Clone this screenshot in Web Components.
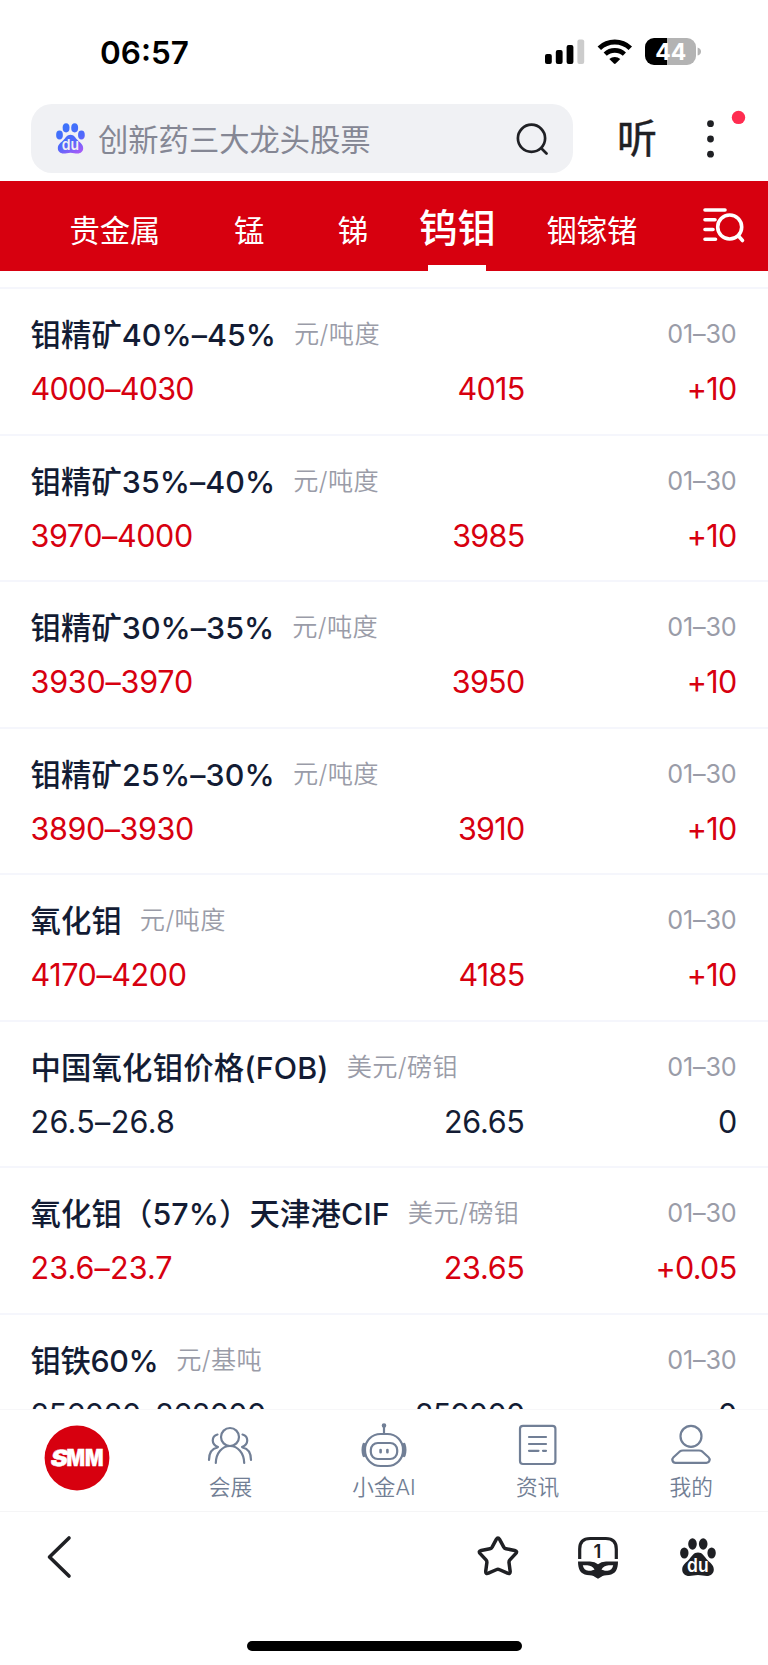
<!doctype html>
<html lang="zh-CN">
  <head>
    <meta charset="UTF-8" />
    <meta name="viewport" content="width=device-width, initial-scale=1.0" />
    <title>钨钼</title>
    <style>
		body {
			margin: 0;
			background: #fff;
			font-family: Inter, "Noto Sans CJK SC", sans-serif;
		}
    </style>
  </head>
  <body>

    <metal-app></metal-app>

    <script>
		// Small helper: open shadow root with some markup in it.
		function render(el, html) {
			el.attachShadow({ mode: 'open' }).innerHTML = html;
		}

		class StatusBar extends HTMLElement {
			constructor() {
				super();
				render(this, `
				<style>
					:host { display: flex; justify-content: space-between; height: 104px; box-sizing: border-box; padding: 33px 67px 0 100px; }
					.time { font-size: 31.5px; font-weight: 600; line-height: 39px; color: #000; }
					svg { display: block; }
				</style>
				<span class="time"><slot></slot></span>
				<svg width="157" height="38" viewBox="544 33 157 38">
					<rect x="545" y="54" width="6.8" height="10" rx="2"/>
					<rect x="555.8" y="50" width="6.8" height="14" rx="2"/>
					<rect x="566.6" y="45" width="6.8" height="19" rx="2"/>
					<rect x="577.4" y="39.5" width="6.8" height="24.5" rx="2" fill="#ccc"/>
					<g fill="none" stroke="#000" stroke-width="5">
						<path d="M599.3 48.3a22.5 22.5 0 0 1 31 0"/>
						<path d="M605.2 54.2a14 14 0 0 1 19.2 0" stroke-width="4.6"/>
					</g>
					<path d="M609.3 59a8.4 8.4 0 0 1 11 0l-4.6 4.6q-.9.8-1.8 0z"/>
					<path d="M654 38h13v27h-13a9 9 0 0 1-9-9v-9a9 9 0 0 1 9-9z"/>
					<path d="M667 38h20a9 9 0 0 1 9 9v9a9 9 0 0 1-9 9h-20z" fill="#b3b3b3"/>
					<path d="M697.6 47.5q3.4 1 3.4 4t-3.4 4z" fill="#b3b3b3"/>
					<text x="670.7" y="59.8" text-anchor="middle" font-size="23" font-weight="650" fill="#fff" textLength="31">44</text>
				</svg>`);
			}
		}
		customElements.define('status-bar', StatusBar);

		class PawIcon extends HTMLElement {
			constructor() {
				super();
				render(this, `
				<style>
					:host { display: block; width: 36px; height: 38px; }
					svg { display: block; width: 100%; height: 100%; }
					.fill { fill: var(--paw-fill, #1f2024); }
				</style>
				<svg viewBox="0 0 36 38">
					<defs>
						<linearGradient id="paw" gradientUnits="userSpaceOnUse" x1="8" y1="6" x2="26" y2="38">
							<stop offset="0" stop-color="#3d72fb"/>
							<stop offset=".55" stop-color="#5068fb"/>
							<stop offset="1" stop-color="#a35cf8"/>
						</linearGradient>
					</defs>
					<g class="fill">
						<ellipse cx="12.5" cy="6" rx="4.3" ry="5.8"/>
						<ellipse cx="23.2" cy="6" rx="4.3" ry="5.8"/>
						<ellipse cx="4.3" cy="15" rx="4.2" ry="5.6"/>
						<ellipse cx="31.6" cy="15" rx="4.2" ry="5.6"/>
						<path d="M18 14.5c4.5 0 6 3.5 8.5 6.5 3 3.5 7.3 5.5 7.3 10.5 0 4-3 6.5-7 6.5-3 0-5.5-1-8.8-1s-5.8 1-8.8 1c-4 0-7-2.5-7-6.5 0-5 4.3-7 7.3-10.5 2.5-3 4-6.5 8.5-6.5z"/>
					</g>
					<text x="17.8" y="34" text-anchor="middle" font-size="18.5" font-weight="600" fill="var(--paw-text, #fff)" textLength="21.5" lengthAdjust="spacingAndGlyphs">du</text>
				</svg>`);
				if (this.hasAttribute('gradient')) {
					this.shadowRoot.querySelector('.fill').style.fill = 'url(#paw)';
				}
			}
		}
		customElements.define('paw-icon', PawIcon);

		class SearchHeader extends HTMLElement {
			constructor() {
				super();
				render(this, `
				<style>
					:host { display: flex; height: 77px; align-items: flex-start; }
					.box {
						display: flex; align-items: center; box-sizing: border-box;
						width: 542px; height: 69px; margin-left: 31px; padding: 0 25px;
						border-radius: 21px; background: #f0f1f4;
					}
					paw-icon { width: 29px; height: 30.5px; margin-right: 13px; --paw-text: #f0f1f4; }
					.hint { flex: 1; padding-top: 2px; font-size: 30.3px; line-height: 44px; color: #858794; white-space: nowrap; }
					.listen { margin-left: 44px; width: 42px; font-size: 40px; line-height: 70px; color: #1f2024; -webkit-text-stroke: .5px #1f2024; }
					.more { margin-left: 40px; }
					svg { display: block; flex: none; }
				</style>
				<div class="box">
					<paw-icon gradient></paw-icon>
					<span class="hint"><slot></slot></span>
					<svg width="32" height="32" viewBox="0 0 32 32" fill="none" stroke="#1f2024" stroke-width="2.7" stroke-linecap="round">
						<circle cx="15.5" cy="15.3" r="13.6"/>
						<path d="M25.5 25.5l5 5"/>
					</svg>
				</div>
				<span class="listen">听</span>
				<svg class="more" width="58" height="69" viewBox="0 0 58 69" fill="#1f2024">
					<circle cx="11.5" cy="19.7" r="3.4"/><circle cx="11.5" cy="35" r="3.4"/><circle cx="11.5" cy="50.2" r="3.4"/>
					<circle cx="39.5" cy="13.4" r="6.7" fill="#ff2c50"/>
				</svg>`);
			}
		}
		customElements.define('search-header', SearchHeader);

		class MetalTab extends HTMLElement {
			constructor() {
				super();
				render(this, `
				<style>
					:host { display: flex; flex-direction: column; align-items: center; flex: none; height: 90px; font-size: 30.3px; line-height: 100px; color: #fff; white-space: nowrap; }
					:host([active]) { font-size: 38.5px; font-weight: 500; line-height: 94px; }
					.label { height: 84px; }
					.bar { display: none; width: 58px; height: 6px; background: #fff; }
					:host([active]) .bar { display: block; }
				</style>
				<div class="label"><slot></slot></div>
				<div class="bar"></div>`);
			}
		}
		customElements.define('metal-tab', MetalTab);

		class MetalTabs extends HTMLElement {
			constructor() {
				super();
				render(this, `
				<style>
					:host { display: flex; justify-content: space-between; height: 90px; padding: 0 22.5px 0 69.5px; background: #d7000f; }
					.tabs { display: flex; gap: 73.5px; }
					::slotted(:nth-child(4)) { margin-left: -22.5px; }
					::slotted(:nth-child(5)) { margin-left: -23px; }
					svg { margin-top: 24px; }
				</style>
				<div class="tabs"><slot></slot></div>
				<svg width="44" height="44" viewBox="0 0 44 44" fill="none" stroke="#fff" stroke-width="3.6" stroke-linecap="round">
					<path d="M3 5h20M3 14.8h10M3 24.5h8M3 34.2h10.5"/>
					<circle cx="27.7" cy="22" r="12"/>
					<path d="M36.5 31l4 4.5"/>
				</svg>`);
			}
		}
		customElements.define('metal-tabs', MetalTabs);

		class PriceRow extends HTMLElement {
			constructor() {
				super();
				render(this, `
				<style>
					:host { display: block; box-sizing: border-box; height: 146.5px; padding: 24px 31.5px 0 30.5px; border-top: 2px solid #f5f6fc; color: #d7000f; }
					:host([flat]) { color: #131c34; }
					.head { display: flex; align-items: center; height: 44px; }
					.name { font-size: 30.4px; font-weight: 500; line-height: 44px; letter-spacing: var(--name-track, .05px); color: #131c34; white-space: nowrap; }
					.unit { flex: 1; margin: -2px 0 0 18px; font-size: 25.2px; font-weight: 350; line-height: 44px; letter-spacing: .4px; color: #9a9ca8; }
					.date { margin-top: -2px; font-size: 25.2px; line-height: 44px; letter-spacing: -.2px; color: #9a9ca8; }
					.nums { display: grid; grid-template-columns: 1fr auto 212px; margin-top: 11px; font-size: 30.5px; line-height: 42px; letter-spacing: -.7px; }
					.range { letter-spacing: var(--range-track, -.4px); }
					.avg { letter-spacing: var(--avg-track, -.7px); }
					.change { text-align: right; }
				</style>
				<div class="head">
					<span class="name"><slot></slot></span>
					<span class="unit">${this.getAttribute('unit')}</span>
					<span class="date">01–30</span>
				</div>
				<div class="nums">
					<span class="range">${this.getAttribute('range')}</span>
					<span class="avg">${this.getAttribute('avg')}</span>
					<span class="change">${this.getAttribute('change')}</span>
				</div>`);
			}
		}
		customElements.define('price-row', PriceRow);

		class NavItem extends HTMLElement {
			constructor() {
				super();
				render(this, `
				<style>
					:host { display: flex; flex-direction: column; align-items: center; flex: 1; color: #717e94; font-size: 21.7px; font-weight: 350; line-height: 31px; }
					::slotted(svg) { display: block; fill: none; stroke: #717f96; stroke-width: 2.2; stroke-linecap: round; stroke-linejoin: round; }
				</style>
				<slot name="icon"></slot>
				<slot></slot>`);
			}
		}
		customElements.define('nav-item', NavItem);

		class AppNav extends HTMLElement {
			constructor() {
				super();
				render(this, `
				<style>
					:host { display: flex; box-sizing: border-box; height: 103px; border-top: 1px solid #f7f7f9; border-bottom: 1px solid #f5f5f6; }
					.logo { flex: 1; display: flex; justify-content: center; padding-top: 15px; }
				</style>
				<div class="logo">
					<svg width="66" height="66" viewBox="0 0 66 66">
						<circle cx="33" cy="33" r="32.4" fill="#d7000f"/>
						<g font-size="22.5" font-weight="900" fill="#fff" stroke="#fff" stroke-width=".4">
							<text transform="translate(5.5 41.3) skewX(-12)" textLength="17" lengthAdjust="spacingAndGlyphs">S</text>
							<text x="22.5" y="41.3" textLength="37" lengthAdjust="spacingAndGlyphs">MM</text>
						</g>
					</svg>
				</div>
				<nav-item>
					<svg slot="icon" width="60" height="62" viewBox="0 0 60 62">
						<circle cx="30" cy="27" r="9"/>
						<path d="M15.8 53c.2-10 6.4-17 14.2-17s14 7 14.2 17"/>
						<path d="M17.5 24.5c-6.3 1.8-6.5 10 .5 12.5M17.5 37.5C12 38.5 9 43 9 50M42.5 24.5c6.3 1.8 6.5 10-.5 12.5M42.5 37.5C48 38.5 51 43 51 50"/>
					</svg>
					会展
				</nav-item>
				<nav-item>
					<svg slot="icon" width="60" height="62" viewBox="0 0 60 62">
						<path d="M30 17v6"/>
						<circle cx="30" cy="15.5" r="1.2" fill="#717f96"/>
						<rect x="11" y="24" width="38" height="32" rx="15.5"/>
						<rect x="16.8" y="33" width="26.4" height="16" rx="7"/>
						<path d="M10 34.5q-1.8 5.5 0 11M50 34.5q1.8 5.5 0 11" stroke-width="3.2"/>
						<path d="M26.6 40v2.2M33.4 40v2.2" stroke-width="2.6"/>
					</svg>
					小金AI
				</nav-item>
				<nav-item>
					<svg slot="icon" width="60" height="62" viewBox="0 0 60 62">
						<rect x="12" y="15.8" width="35.4" height="38.2" rx="3"/>
						<path d="M21 27h17M21 34h17M21 40.8h9.5M35 40.8h3"/>
					</svg>
					资讯
				</nav-item>
				<nav-item>
					<svg slot="icon" width="60" height="62" viewBox="0 0 60 62">
						<circle cx="30" cy="26.3" r="10.5"/>
						<path d="M22 40.5h16q2 0 3.5 1.2l6 5.5q1.5 1.4 1 3.4-.6 2.2-3 2.2h-31q-2.4 0-3-2.2-.5-2 1-3.4l6-5.5Q20 40.5 22 40.5z"/>
					</svg>
					我的
				</nav-item>`);
			}
		}
		customElements.define('app-nav', AppNav);

		class BrowserBar extends HTMLElement {
			constructor() {
				super();
				render(this, `
				<style>
					:host { display: flex; flex-direction: column; align-items: center; height: 153px; }
					.tools { display: flex; align-items: center; align-self: stretch; height: 46px; margin-top: 22px; padding: 0 52px 0 37px; gap: 56px; }
					.back { margin-right: auto; }
					paw-icon { margin-left: 4px; }
					.home { width: 275px; height: 10px; margin-top: 60.5px; border-radius: 5px; background: #000; }
					svg { display: block; }
				</style>
				<div class="tools">
					<svg class="back" width="44" height="46" viewBox="0 0 44 46" fill="none" stroke="#1f2024" stroke-width="3.6" stroke-linecap="round" stroke-linejoin="round">
						<path d="M32 4L12.5 23l19.500 19"/>
					</svg>
					<svg width="44" height="46" viewBox="0 0 44 46" fill="none" stroke="#1f2024" stroke-width="3.6" stroke-linejoin="round">
						<path d="M20.3 4.6q1.7-3 3.4 0l4.3 8q.8 1.4 2.3 1.7l9 1.7q3.2.8 1 3.3l-6 6.5q-1 1.1-.9 2.7l1.2 9q.2 3.2-2.8 2l-8-3.6q-1.8-.8-3.6 0l-8 3.6q-3 1.2-2.8-2l1.2-9q.1-1.6-.9-2.7l-6-6.5q-2.200-2.500 1-3.300l9-1.700q1.500-.3 2.300-1.700z" transform="translate(.6 .9) scale(.97)"/>
					</svg>
					<svg width="44" height="46" viewBox="0 0 44 46">
						<path d="M3.7 25V15q0-10.5 10.5-10.5h15.6Q40.300 4.500 40.300 15v10" fill="none" stroke="#1f2024" stroke-width="3.2"/>
						<path fill-rule="evenodd" fill="#1f2024" d="M2 27.5h12q5 0 8 2.7 3-2.7 8-2.7h12c0 8-2.6 12.5-9 13.5-4 .7-6 .3-8 2l-3 1.7-3-1.7c-2-1.7-4-1.3-8-2-6.4-1-9-5.5-9-13.5zM6.8 31.2c.7 3.3 2.5 5.3 5.7 5.5 3 .2 4.5-.5 6-1.2-1.5-2.5-3.7-4-7.2-4.2zM37.2 31.2c-.7 3.3-2.5 5.3-5.7 5.5-3 .2-4.5-.5-6-1.2 1.5-2.5 3.7-4 7.2-4.2z"/>
						<text x="21.5" y="24.3" text-anchor="middle" font-size="18.5" font-weight="600" fill="#1f2024">1</text>
					</svg>
					<paw-icon></paw-icon>
				</div>
				<div class="home"></div>`);
			}
		}
		customElements.define('browser-bar', BrowserBar);

		class MetalApp extends HTMLElement {
			constructor() {
				super();
				render(this, `
				<style>
					:host { display: flex; flex-direction: column; width: 768px; height: 1665px; overflow: hidden; background: #fff; }
					status-bar, search-header, metal-tabs, app-nav, browser-bar { flex: none; }
					.list { flex: 1; min-height: 0; overflow: hidden; padding-top: 16px; }
				</style>
				<status-bar>06:57</status-bar>
				<search-header>创新药三大龙头股票</search-header>
				<metal-tabs>
					<metal-tab>贵金属</metal-tab>
					<metal-tab>锰</metal-tab>
					<metal-tab>锑</metal-tab>
					<metal-tab active>钨钼</metal-tab>
					<metal-tab>铟镓锗</metal-tab>
				</metal-tabs>
				<div class="list">
					<price-row style="--range-track: -.7px" unit="元/吨度" range="4000–4030" avg="4015" change="+10">钼精矿40%–45%</price-row>
					<price-row unit="元/吨度" range="3970–4000" avg="3985" change="+10">钼精矿35%–40%</price-row>
					<price-row style="--range-track: -.2px" unit="元/吨度" range="3930–3970" avg="3950" change="+10">钼精矿30%–35%</price-row>
					<price-row style="--name-track: .15px" unit="元/吨度" range="3890–3930" avg="3910" change="+10">钼精矿25%–30%</price-row>
					<price-row unit="元/吨度" range="4170–4200" avg="4185" change="+10">氧化钼</price-row>
					<price-row flat style="--name-track: .15px; --range-track: .3px; --avg-track: -.3px" unit="美元/磅钼" range="26.5–26.8" avg="26.65" change="0">中国氧化钼价格(FOB)</price-row>
					<price-row style="--name-track: .1px; --range-track: .1px; --avg-track: -.3px" unit="美元/磅钼" range="23.6–23.7" avg="23.65" change="+0.05">氧化钼（57%）天津港CIF</price-row>
					<price-row flat style="--name-track: -.4px; --range-track: -.6px" unit="元/基吨" range="256000–262000" avg="259000" change="0">钼铁60%</price-row>
				</div>
				<app-nav></app-nav>
				<browser-bar></browser-bar>`);
			}
		}
		customElements.define('metal-app', MetalApp);
    </script>

  </body>
</html>
